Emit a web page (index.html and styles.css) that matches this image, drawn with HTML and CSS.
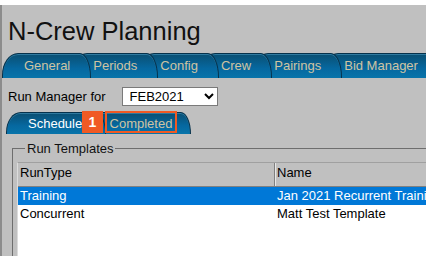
FILE: index.html
```html
<!DOCTYPE html>
<html>
<head>
	<meta charset="utf-8">
	<title>N-Crew Planning</title>
	<link rel="stylesheet" href="styles.css">
</head>
<body>
	<div class="page">
		<h1>N-Crew Planning</h1>
		<div class="tabs">
			<span class="tab t1">General</span>
			<span class="tab t2">Periods</span>
			<span class="tab t3">Config</span>
			<span class="tab t4">Crew</span>
			<span class="tab t5">Pairings</span>
			<span class="tab t6">Bid Manager</span>
		</div>
		<div class="run-row">
			<label for="period">Run Manager for</label>
			<select id="period" class="period">
				<option>FEB2021</option>
				<option>JAN2021</option>
			</select>
		</div>
		<div class="subtabs">
			<span class="tab sub active">Scheduler</span>
			<span class="tab sub last">Completed</span>
			<span class="badge">1</span>
			<span class="callout"></span>
		</div>
		<fieldset class="group">
			<legend>Run Templates</legend>
			<div class="list">
				<div class="row head">
					<span class="col">RunType</span>
					<span class="col">Name</span>
				</div>
				<div class="row selected">
					<span class="col">Training</span>
					<span class="col">Jan 2021 Recurrent Training</span>
				</div>
				<div class="row">
					<span class="col">Concurrent</span>
					<span class="col">Matt Test Template</span>
				</div>
			</div>
		</fieldset>
	</div>
</body>
</html>
```

FILE: styles.css
```css
html, body{margin: 0; padding: 0; background: #fff; overflow: hidden;}
body{font-family: "Liberation Sans", Arial, sans-serif; font-size: 13px; color: #000;}
.page{margin-top: 5px; height: 251px; background: #c0c0c0; border-left: 2px solid #8c8c8c; overflow: hidden;}
h1{margin: 0; padding: 12px 0 0 6px; height: 36px; font-size: 25.5px; font-weight: normal; line-height: 28px; color: #111;}

.tabs{display: flex; height: 25px; white-space: nowrap;}
.tab{position: relative; display: inline-block; flex: none; box-sizing: border-box; height: 25px; line-height: 24px; padding: 0 20px 0 21px; margin-left: -20px; color: #cfc4a2; background: linear-gradient(#0a4f72, #0668a0 60%, #0874aa); border: 1px solid #06324c; border-bottom: none; border-radius: 16px 11px 0 0 / 22px 24px 0 0; box-shadow: inset 0 1px 0 #2f7aa0;}
.t1{margin-left: 0; z-index: 7;}
.t2{z-index: 6;}
.t3{z-index: 5;}
.t4{z-index: 4;}
.t5{z-index: 3;}
.t6{z-index: 2;}

.run-row{display: flex; align-items: center; gap: 16px; padding: 9px 0 0 6px; height: 19px;}
.period{width: 96px; height: 19px; padding: 0 0 0 3px; font-family: "Liberation Sans", Arial, sans-serif; font-size: 13px; color: #000; background: #fff; border: 1px solid #7a7a7a; border-radius: 0;}

.subtabs{position: relative; display: flex; margin: 6px 0 0 4px; height: 22px;}
.tab.sub{height: 22px; line-height: 21px; margin-left: -18px; padding: 0 18px 0 21px;}
.tab.sub.active{margin-left: 0; color: #fff; z-index: 2;}
.tab.sub.last{z-index: 1;}
.badge{position: absolute; left: 76px; top: -1px; width: 21px; height: 22px; line-height: 22px; text-align: center; background: #f05a24; color: #fff; font-weight: bold; font-size: 14px; z-index: 5;}
.callout{position: absolute; left: 99px; top: -1px; width: 68px; height: 18px; border: 2px solid #f05a24; z-index: 5;}

.group{margin: 8px 0 0 10px; padding: 7px 0 0 4px; height: 120px; border: 1px solid #6e6e6e; border-right: none; border-bottom: none;}
.group legend{margin-left: 8px; padding: 0 2px; color: #111; line-height: 13px;}
.list{background: #fff; height: 100px; border-top: 1px solid #a0a0a0; border-left: 1px solid #dcdcdc; white-space: nowrap;}
.row{display: grid; grid-template-columns: 257px 1fr; height: 18px; line-height: 18px;}
.row .col{padding-left: 2px; overflow: hidden;}
.row.head{height: 23px; line-height: 19px; background: #c0c0c0; border-bottom: 1px solid #808080;}
.row.head .col:first-child{border-right: 1px solid #808080; box-shadow: 1px 0 0 #e8e8e8;}
.row.selected{background: #0078d7; color: #fff;}
```
